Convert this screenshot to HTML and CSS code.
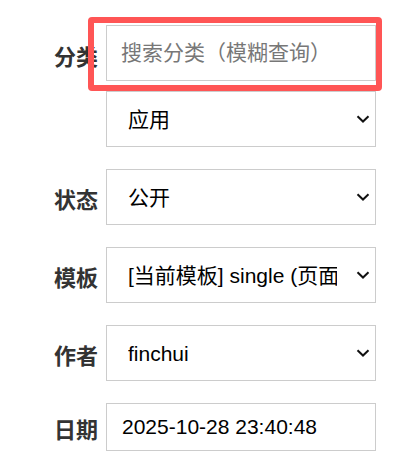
FILE: index.html
```html
<!DOCTYPE html>
<html lang="zh-CN">
<head>
<meta charset="utf-8">
<link rel="stylesheet" href="styles.css">
</head>
<body>
<form class="form">
  <div class="row row-top">
    <label class="label">分类</label>
    <div class="stack">
      <div class="search-wrap">
        <input class="control search" type="text" placeholder="搜索分类（模糊查询）">
        <div class="highlight"></div>
      </div>
      <div class="select-wrap">
        <select class="control select"><option>应用</option></select>
        <svg class="chevron" width="14" height="8" viewBox="0 0 14 8"><polyline points="1.5,1.2 7,6.5 12.5,1.2" fill="none" stroke="#111" stroke-width="2"/></svg>
      </div>
    </div>
  </div>
  <div class="row">
    <label class="label">状态</label>
    <div class="select-wrap">
      <select class="control select"><option>公开</option></select>
      <svg class="chevron" width="14" height="8" viewBox="0 0 14 8"><polyline points="1.5,1.2 7,6.5 12.5,1.2" fill="none" stroke="#111" stroke-width="2"/></svg>
    </div>
  </div>
  <div class="row">
    <label class="label">模板</label>
    <div class="select-wrap">
      <select class="control select"><option>[当前模板] single (页面模板)</option></select>
      <svg class="chevron" width="14" height="8" viewBox="0 0 14 8"><polyline points="1.5,1.2 7,6.5 12.5,1.2" fill="none" stroke="#111" stroke-width="2"/></svg>
    </div>
  </div>
  <div class="row">
    <label class="label">作者</label>
    <div class="select-wrap">
      <select class="control select"><option>finchui</option></select>
      <svg class="chevron" width="14" height="8" viewBox="0 0 14 8"><polyline points="1.5,1.2 7,6.5 12.5,1.2" fill="none" stroke="#111" stroke-width="2"/></svg>
    </div>
  </div>
  <div class="row">
    <label class="label">日期</label>
    <input class="control date" type="text" value="2025-10-28 23:40:48">
  </div>
</form>
</body>
</html>
```
FILE: styles.css
```css
html, body {
  margin: 0;
  padding: 0;
  background: #fff;
}
body {
  font-family: "Liberation Sans", "Noto Sans CJK SC", sans-serif;
}
.form {
  display: flex;
  flex-direction: column;
  gap: 22px;
  padding-top: 25px;
}
.row {
  display: flex;
  align-items: center;
  gap: 8px;
}
.row-top {
  align-items: flex-start;
}
.label {
  width: 98px;
  text-align: right;
  font-weight: bold;
  font-size: 22px;
  color: #333;
  font-family: "Noto Sans CJK SC", sans-serif;
  padding-top: 2px;
}
.row-top .label {
  line-height: 56px;
}
.stack {
  display: flex;
  flex-direction: column;
  gap: 10px;
  width: 270px;
}
.control {
  display: block;
  box-sizing: border-box;
  width: 270px;
  height: 56px;
  margin: 0;
  border: 1px solid #ccc;
  border-radius: 0;
  background: #fff;
  font-family: "Liberation Sans", "Noto Sans CJK SC", sans-serif;
  font-size: 21px;
  color: #000;
  padding: 0 14px;
  outline: none;
}
.search::placeholder {
  color: #777;
}
.select-wrap {
  position: relative;
  width: 270px;
}
.select {
  -webkit-appearance: none;
  appearance: none;
  padding: 0 38px 0 21px;
}
.chevron {
  position: absolute;
  right: 6px;
  top: 50%;
  margin-top: -4px;
  pointer-events: none;
}
.date {
  height: 48px;
  padding: 0 15px;
}
.search-wrap {
  position: relative;
}
.highlight {
  position: absolute;
  left: -18px;
  right: -6px;
  top: -8px;
  bottom: -10px;
  border: 6px solid #ff5555;
  border-radius: 4px;
  pointer-events: none;
}
```
